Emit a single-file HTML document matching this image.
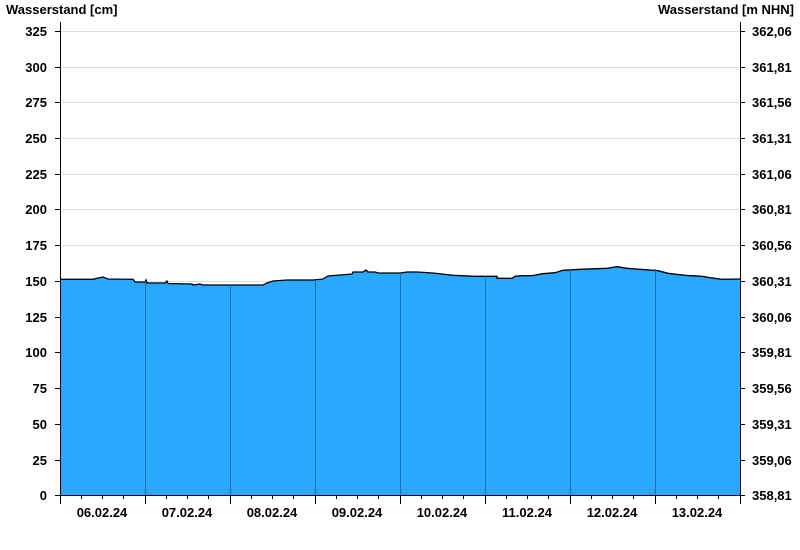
<!DOCTYPE html><html><head><style>body{margin:0;background:#fff}svg{display:block}text{font-family:"Liberation Sans",Arial,sans-serif;font-size:13px;font-weight:bold;fill:#000}</style></head><body>
<svg width="800" height="550" xmlns="http://www.w3.org/2000/svg">
<g stroke="#dcdcdc" stroke-width="1">
<line x1="60" x2="740" y1="31.5" y2="31.5"/><line x1="60" x2="740" y1="67.5" y2="67.5"/><line x1="60" x2="740" y1="102.5" y2="102.5"/><line x1="60" x2="740" y1="138.5" y2="138.5"/><line x1="60" x2="740" y1="174.5" y2="174.5"/><line x1="60" x2="740" y1="209.5" y2="209.5"/><line x1="60" x2="740" y1="245.5" y2="245.5"/><line x1="60" x2="740" y1="281.5" y2="281.5"/>
</g>
<polygon fill="#29a8ff" points="60,279.3 93,279.3 98,278 103,277 108,279 133,279.3 135,282 145,282 146,280 147,283 165,283 167,281 168,283.5 192,284 193,285 200,284 203,285 263,285 267,283 273,281 287,280 313,280 323,279 328,276 340,275 352,274 353,272 363,272 366,270 368,272 375,272 378,273 400,273 407,272 417,272 433,273 453,275.3 475,276.3 497,276.3 497,278.3 512,278.3 515,276.3 522,275.7 532,275.7 543,273.7 555,272.7 563,270.3 580,269.3 597,268.7 607,268.3 617,266.7 627,268.3 640,269.3 658,270.7 668,273.3 685,275.3 702,276.3 710,277.7 722,279.3 740,279 740,495 60,495"/>
<polyline fill="none" stroke="#000" stroke-width="1.3" points="60,279.3 93,279.3 98,278 103,277 108,279 133,279.3 135,282 145,282 146,280 147,283 165,283 167,281 168,283.5 192,284 193,285 200,284 203,285 263,285 267,283 273,281 287,280 313,280 323,279 328,276 340,275 352,274 353,272 363,272 366,270 368,272 375,272 378,273 400,273 407,272 417,272 433,273 453,275.3 475,276.3 497,276.3 497,278.3 512,278.3 515,276.3 522,275.7 532,275.7 543,273.7 555,272.7 563,270.3 580,269.3 597,268.7 607,268.3 617,266.7 627,268.3 640,269.3 658,270.7 668,273.3 685,275.3 702,276.3 710,277.7 722,279.3 740,279"/>
<g stroke="#1a6fa8" stroke-width="1">
<line x1="145.5" x2="145.5" y1="281" y2="495"/><line x1="230.5" x2="230.5" y1="284" y2="495"/><line x1="315.5" x2="315.5" y1="280" y2="495"/><line x1="400.5" x2="400.5" y1="273" y2="495"/><line x1="485.5" x2="485.5" y1="276" y2="495"/><line x1="570.5" x2="570.5" y1="269" y2="495"/><line x1="655.5" x2="655.5" y1="269" y2="495"/>
</g>
<g stroke="#000" stroke-width="1">
<line x1="60.5" x2="60.5" y1="22" y2="504"/><line x1="740.5" x2="740.5" y1="22" y2="495"/><line x1="55" x2="745" y1="495.5" y2="495.5"/>
<path d="M55 31.5h5M55 67.5h5M55 102.5h5M55 138.5h5M55 174.5h5M55 209.5h5M55 245.5h5M55 281.5h5M55 317.5h5M55 352.5h5M55 388.5h5M55 424.5h5M55 460.5h5M740 31.5h5M740 67.5h5M740 102.5h5M740 138.5h5M740 174.5h5M740 209.5h5M740 245.5h5M740 281.5h5M740 317.5h5M740 352.5h5M740 388.5h5M740 424.5h5M740 460.5h5"/>
<path d="M145.5 495v9M230.5 495v9M315.5 495v9M400.5 495v9M485.5 495v9M570.5 495v9M655.5 495v9M740.5 495v9M81.5 495v4M102.5 495v4M123.5 495v4M166.5 495v4M187.5 495v4M208.5 495v4M251.5 495v4M272.5 495v4M293.5 495v4M336.5 495v4M357.5 495v4M378.5 495v4M421.5 495v4M442.5 495v4M463.5 495v4M506.5 495v4M527.5 495v4M548.5 495v4M591.5 495v4M612.5 495v4M633.5 495v4M676.5 495v4M697.5 495v4M718.5 495v4"/>
</g>
<text x="6" y="14">Wasserstand [cm]</text>
<text x="794" y="14" text-anchor="end">Wasserstand [m NHN]</text>
<g text-anchor="end">
<text x="47" y="36">325</text><text x="47" y="72">300</text><text x="47" y="107">275</text><text x="47" y="143">250</text><text x="47" y="179">225</text><text x="47" y="214">200</text><text x="47" y="250">175</text><text x="47" y="286">150</text><text x="47" y="322">125</text><text x="47" y="357">100</text><text x="47" y="393">75</text><text x="47" y="429">50</text><text x="47" y="465">25</text><text x="47" y="500">0</text>
</g>
<g>
<text x="752" y="36">362,06</text><text x="752" y="72">361,81</text><text x="752" y="107">361,56</text><text x="752" y="143">361,31</text><text x="752" y="179">361,06</text><text x="752" y="214">360,81</text><text x="752" y="250">360,56</text><text x="752" y="286">360,31</text><text x="752" y="322">360,06</text><text x="752" y="357">359,81</text><text x="752" y="393">359,56</text><text x="752" y="429">359,31</text><text x="752" y="465">359,06</text><text x="752" y="500">358,81</text>
</g>
<g text-anchor="middle">
<text x="102" y="517">06.02.24</text><text x="187" y="517">07.02.24</text><text x="272" y="517">08.02.24</text><text x="357" y="517">09.02.24</text><text x="442" y="517">10.02.24</text><text x="527" y="517">11.02.24</text><text x="612" y="517">12.02.24</text><text x="697" y="517">13.02.24</text>
</g>
</svg></body></html>
